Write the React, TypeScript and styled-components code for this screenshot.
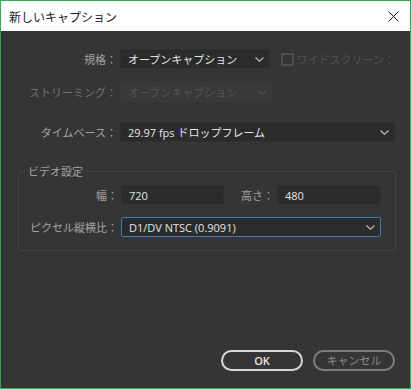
import React from "react";
import styled, { createGlobalStyle } from "styled-components";

const GlobalStyle = createGlobalStyle`
  html, body {
    margin: 0;
    padding: 0;
    background: #353535;
  }
  body {
    font-family: "Open Sans", "Noto Sans CJK JP", sans-serif;
    font-size: 11px;
  }
`;

const Window = styled.div`
  width: 411px;
  height: 389px;
  box-sizing: border-box;
  border: 1px solid #3aa757;
  display: flex;
  flex-direction: column;
  background: #353535;
`;

const TitleBar = styled.div`
  height: 30px;
  background: #ffffff;
  display: flex;
  align-items: center;
  justify-content: space-between;
  padding: 0 9px 0 8px;
  color: #1a1a1a;
  font-family: "Noto Sans CJK JP", sans-serif;
  font-size: 12px;
`;

const CloseIcon = styled.svg`
  width: 11px;
  height: 11px;
  margin-right: 2px;
`;

const Body = styled.div`
  flex: 1;
  display: flex;
  flex-direction: column;
  padding: 18px 15px 17px 16px;
  border-left: 1px solid #303030;
`;

const Row = styled.div<{ $gap: number }>`
  display: flex;
  align-items: center;
  height: 20px;
  margin-bottom: ${({ $gap }) => $gap}px;
`;

const Label = styled.div<{ $width: number; $dim?: boolean }>`
  width: ${({ $width }) => $width}px;
  text-align: right;
  padding-right: 3px;
  box-sizing: border-box;
  flex-shrink: 0;
  color: ${({ $dim }) => ($dim ? "#727272" : "#a3a3a3")};
  font-family: "Noto Sans CJK JP", sans-serif;
  font-size: 11px;
  white-space: nowrap;
`;

const Select = styled.div<{
  $width?: number;
  $disabled?: boolean;
  $focus?: boolean;
}>`
  ${({ $width }) => ($width ? `width: ${$width}px;` : "flex: 1;")}
  height: 20px;
  box-sizing: border-box;
  display: flex;
  align-items: center;
  justify-content: space-between;
  padding: 0 5px 0 7px;
  border-radius: 2px;
  background: ${({ $disabled }) => ($disabled ? "#393939" : "#2b2b2b")};
  border: 1px solid
    ${({ $focus, $disabled }) =>
      $focus ? "#4777b0" : $disabled ? "#393939" : "#303030"};
  color: ${({ $disabled }) => ($disabled ? "#555555" : "#e4e4e4")};
  font-size: 11px;
  white-space: nowrap;
`;

const Chevron = styled.svg<{ $disabled?: boolean }>`
  width: 9px;
  height: 5px;
  stroke: ${({ $disabled }) => ($disabled ? "#505050" : "#b8b8b8")};
  fill: none;
  stroke-width: 1.2;
`;

const Input = styled.div<{ $width: number }>`
  width: ${({ $width }) => $width}px;
  height: 20px;
  box-sizing: border-box;
  background: #2b2b2b;
  border: 1px solid #303030;
  border-radius: 2px;
  display: flex;
  align-items: center;
  padding-left: 7px;
  color: #e4e4e4;
  font-size: 11px;
`;

const CheckWrap = styled.div`
  display: flex;
  align-items: center;
  margin-left: 11px;
  color: #525252;
  font-family: "Noto Sans CJK JP", sans-serif;
  font-size: 11px;
  white-space: nowrap;
`;

const CheckBox = styled.div`
  width: 13px;
  height: 13px;
  box-sizing: border-box;
  border: 2px solid #4e4e4e;
  border-radius: 1px;
  margin-right: 3px;
`;

const Group = styled.fieldset`
  margin: 0;
  padding: 6px 14px 13px 0;
  border: 1px solid #444444;
  border-radius: 3px;
  display: flex;
  flex-direction: column;
  gap: 12px;
`;

const Legend = styled.legend`
  margin-left: 6px;
  padding: 0 3px;
  color: #a3a3a3;
  font-family: "Noto Sans CJK JP", sans-serif;
  font-size: 11px;
`;

const GroupRow = styled.div`
  display: flex;
  align-items: center;
  height: 20px;
`;

const Footer = styled.div`
  margin-top: auto;
  display: flex;
  justify-content: flex-end;
  gap: 10px;
`;

const Button = styled.button<{ $primary?: boolean }>`
  width: 82px;
  height: 21px;
  box-sizing: border-box;
  border-radius: 11px;
  background: transparent;
  border: 2px solid ${({ $primary }) => ($primary ? "#d8d8d8" : "#7d7d7d")};
  color: ${({ $primary }) => ($primary ? "#e8e8e8" : "#8c8c8c")};
  font-family: "Open Sans", "Noto Sans CJK JP", sans-serif;
  font-size: 11px;
  font-weight: ${({ $primary }) => ($primary ? 600 : 400)};
  padding: 0;
  line-height: 1;
`;

const Arrow = ({ disabled }: { disabled?: boolean }) => (
  <Chevron viewBox="0 0 9 5" $disabled={disabled}>
    <polyline points="0.5,0.5 4.5,4.3 8.5,0.5" />
  </Chevron>
);

export default function App() {
  return (
    <>
      <GlobalStyle />
      <Window>
        <TitleBar>
          <span>新しいキャプション</span>
          <CloseIcon viewBox="0 0 11 11">
            <path d="M0.5 0.5 L10.5 10.5 M10.5 0.5 L0.5 10.5" stroke="#111" strokeWidth="1" />
          </CloseIcon>
        </TitleBar>
        <Body>
          <Row $gap={13}>
            <Label $width={102}>規格：</Label>
            <Select $width={153}>
              オープンキャプション
              <Arrow />
            </Select>
            <CheckWrap>
              <CheckBox />
              ワイドスクリーン：
            </CheckWrap>
          </Row>
          <Row $gap={20}>
            <Label $width={102} $dim>
              ストリーミング：
            </Label>
            <Select $width={153} $disabled>
              オープンキャプション
              <Arrow disabled />
            </Select>
          </Row>
          <Row $gap={21}>
            <Label $width={102}>タイムベース：</Label>
            <Select>
              29.97 fps ドロップフレーム
              <Arrow />
            </Select>
          </Row>
          <Group>
            <Legend>ビデオ設定</Legend>
            <GroupRow>
              <Label $width={102}>幅：</Label>
              <Input $width={103}>720</Input>
              <Label $width={53}>高さ：</Label>
              <Input $width={104}>480</Input>
            </GroupRow>
            <GroupRow>
              <Label $width={102}>ピクセル縦横比：</Label>
              <Select $focus>
                D1/DV NTSC (0.9091)
                <Arrow />
              </Select>
            </GroupRow>
          </Group>
          <Footer>
            <Button $primary>OK</Button>
            <Button>キャンセル</Button>
          </Footer>
        </Body>
      </Window>
    </>
  );
}
